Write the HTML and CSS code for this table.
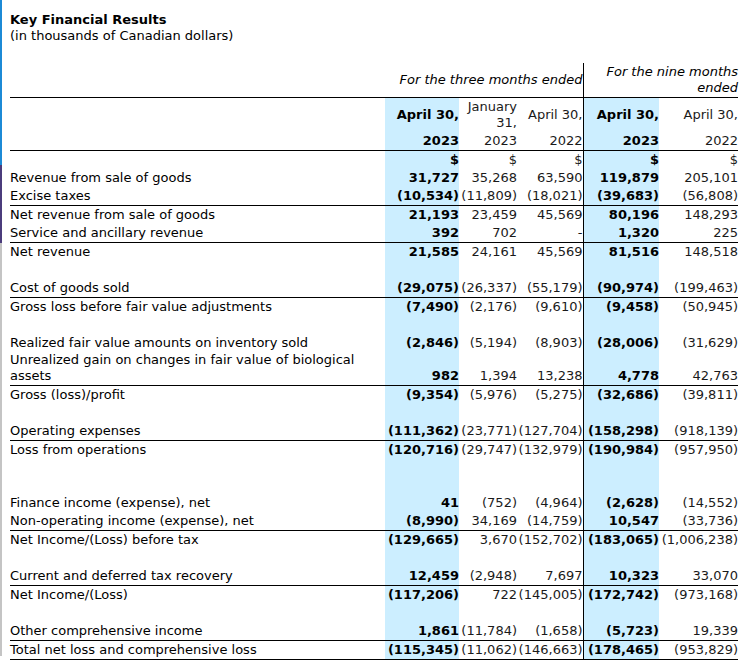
FILE: index.html
```html
<!DOCTYPE html>
<html>
<head>
<meta charset="utf-8">
<link rel="stylesheet" href="styles.css">
</head>
<body>
<div class="page">
  <div class="title">Key Financial Results</div>
  <div class="subtitle">(in thousands of Canadian dollars)</div>
  <table class="fin">
    <colgroup>
      <col class="c-label"><col class="c1"><col class="c2"><col class="c3"><col class="c4"><col class="c5">
    </colgroup>
    <tr class="period rule">
      <td></td>
      <td colspan="3" class="it">For the three months ended</td>
      <td colspan="2" class="it vl">For the nine months ended</td>
    </tr>
    <tr class="mid">
      <td></td>
      <td class="hl b">April 30,</td>
      <td>January 31,</td>
      <td>April 30,</td>
      <td class="hl b vl">April 30,</td>
      <td>April 30,</td>
    </tr>
    <tr class="rule">
      <td></td>
      <td class="hl b">2023</td>
      <td>2023</td>
      <td>2022</td>
      <td class="hl b vl">2023</td>
      <td>2022</td>
    </tr>
    <tr><td></td><td class="hl b">$</td><td>$</td><td>$</td><td class="hl b vl">$</td><td>$</td></tr>
    <tr><td>Revenue from sale of goods</td><td class="hl b">31,727</td><td>35,268</td><td>63,590</td><td class="hl b vl">119,879</td><td>205,101</td></tr>
    <tr class="rule"><td>Excise taxes</td><td class="hl b">(10,534)</td><td>(11,809)</td><td>(18,021)</td><td class="hl b vl">(39,683)</td><td>(56,808)</td></tr>
    <tr><td>Net revenue from sale of goods</td><td class="hl b">21,193</td><td>23,459</td><td>45,569</td><td class="hl b vl">80,196</td><td>148,293</td></tr>
    <tr class="rule"><td>Service and ancillary revenue</td><td class="hl b">392</td><td>702</td><td>-</td><td class="hl b vl">1,320</td><td>225</td></tr>
    <tr><td>Net revenue</td><td class="hl b">21,585</td><td>24,161</td><td>45,569</td><td class="hl b vl">81,516</td><td>148,518</td></tr>
    <tr><td>&nbsp;</td><td class="hl"></td><td></td><td></td><td class="hl vl"></td><td></td></tr>
    <tr class="rule"><td>Cost of goods sold</td><td class="hl b">(29,075)</td><td>(26,337)</td><td>(55,179)</td><td class="hl b vl">(90,974)</td><td>(199,463)</td></tr>
    <tr><td>Gross loss before fair value adjustments</td><td class="hl b">(7,490)</td><td>(2,176)</td><td>(9,610)</td><td class="hl b vl">(9,458)</td><td>(50,945)</td></tr>
    <tr><td>&nbsp;</td><td class="hl"></td><td></td><td></td><td class="hl vl"></td><td></td></tr>
    <tr><td>Realized fair value amounts on inventory sold</td><td class="hl b">(2,846)</td><td>(5,194)</td><td>(8,903)</td><td class="hl b vl">(28,006)</td><td>(31,629)</td></tr>
    <tr class="rule bot"><td>Unrealized gain on changes in fair value of biological<br>assets</td><td class="hl b">982</td><td>1,394</td><td>13,238</td><td class="hl b vl">4,778</td><td>42,763</td></tr>
    <tr><td>Gross (loss)/profit</td><td class="hl b">(9,354)</td><td>(5,976)</td><td>(5,275)</td><td class="hl b vl">(32,686)</td><td>(39,811)</td></tr>
    <tr><td>&nbsp;</td><td class="hl"></td><td></td><td></td><td class="hl vl"></td><td></td></tr>
    <tr class="rule"><td>Operating expenses</td><td class="hl b">(111,362)</td><td>(23,771)</td><td>(127,704)</td><td class="hl b vl">(158,298)</td><td>(918,139)</td></tr>
    <tr><td>Loss from operations</td><td class="hl b">(120,716)</td><td>(29,747)</td><td>(132,979)</td><td class="hl b vl">(190,984)</td><td>(957,950)</td></tr>
    <tr><td>&nbsp;</td><td class="hl"></td><td></td><td></td><td class="hl vl"></td><td></td></tr>
    <tr class="short"><td>&nbsp;</td><td class="hl"></td><td></td><td></td><td class="hl vl"></td><td></td></tr>
    <tr><td>Finance income (expense), net</td><td class="hl b">41</td><td>(752)</td><td>(4,964)</td><td class="hl b vl">(2,628)</td><td>(14,552)</td></tr>
    <tr class="rule"><td>Non-operating income (expense), net</td><td class="hl b">(8,990)</td><td>34,169</td><td>(14,759)</td><td class="hl b vl">10,547</td><td>(33,736)</td></tr>
    <tr><td>Net Income/(Loss) before tax</td><td class="hl b">(129,665)</td><td>3,670</td><td>(152,702)</td><td class="hl b vl">(183,065)</td><td>(1,006,238)</td></tr>
    <tr><td>&nbsp;</td><td class="hl"></td><td></td><td></td><td class="hl vl"></td><td></td></tr>
    <tr class="rule"><td>Current and deferred tax recovery</td><td class="hl b">12,459</td><td>(2,948)</td><td>7,697</td><td class="hl b vl">10,323</td><td>33,070</td></tr>
    <tr><td>Net Income/(Loss)</td><td class="hl b">(117,206)</td><td>722</td><td>(145,005)</td><td class="hl b vl">(172,742)</td><td>(973,168)</td></tr>
    <tr><td>&nbsp;</td><td class="hl"></td><td></td><td></td><td class="hl vl"></td><td></td></tr>
    <tr class="rule"><td>Other comprehensive income</td><td class="hl b">1,861</td><td>(11,784)</td><td>(1,658)</td><td class="hl b vl">(5,723)</td><td>19,339</td></tr>
    <tr class="rule"><td>Total net loss and comprehensive loss</td><td class="hl b">(115,345)</td><td>(11,062)</td><td>(146,663)</td><td class="hl b vl">(178,465)</td><td>(953,829)</td></tr>
  </table>
</div>
</body>
</html>
```

FILE: styles.css
```css
html, body {
  margin: 0;
  padding: 0;
  background: #fff;
}

.page {
  padding: 12px 0 0 10px;
  min-height: 650px;
  background: linear-gradient(to bottom,
      #1c8ad6 0, #1c8ad6 165px,
      #4b3c7c 165px, #4b3c7c 243px,
      #c4c4c4 243px, #c4c4c4 656px,
      #ffffff 656px) no-repeat left top / 2px 662px;
  font-family: "DejaVu Sans", Verdana, sans-serif;
  font-size: 13px;
  line-height: 16px;
  color: #000;
}

.title {
  font-weight: bold;
}

.subtitle {
  margin-bottom: 19px;
}

.fin {
  width: 728px;
  table-layout: fixed;
  border-collapse: collapse;
}

.c-label { width: 375px; }
.c1 { width: 74px; }
.c2 { width: 58px; }
.c3 { width: 66px; }
.c4 { width: 76px; }
.c5 { width: 79px; }

.fin td {
  padding: 1px 0;
  text-align: right;
  vertical-align: middle;
  white-space: nowrap;
  color: #1a1a1a;
}

.fin td:first-child {
  text-align: left;
  color: #000;
}

.fin .mid td {
  white-space: normal;
}

.fin .bot td {
  vertical-align: bottom;
  padding-top: 0;
}

.fin .short td {
  padding-top: 0;
}

.fin .period td {
  white-space: normal;
}

.fin td.it {
  font-style: italic;
  color: #000;
}

.fin tr.rule td {
  border-bottom: 1px solid #000;
}

.fin td.hl {
  background: #cceeff;
}

.fin td.b {
  font-weight: bold;
  color: #000;
}

.fin td.vl {
  border-left: 1px solid #000;
}
```
